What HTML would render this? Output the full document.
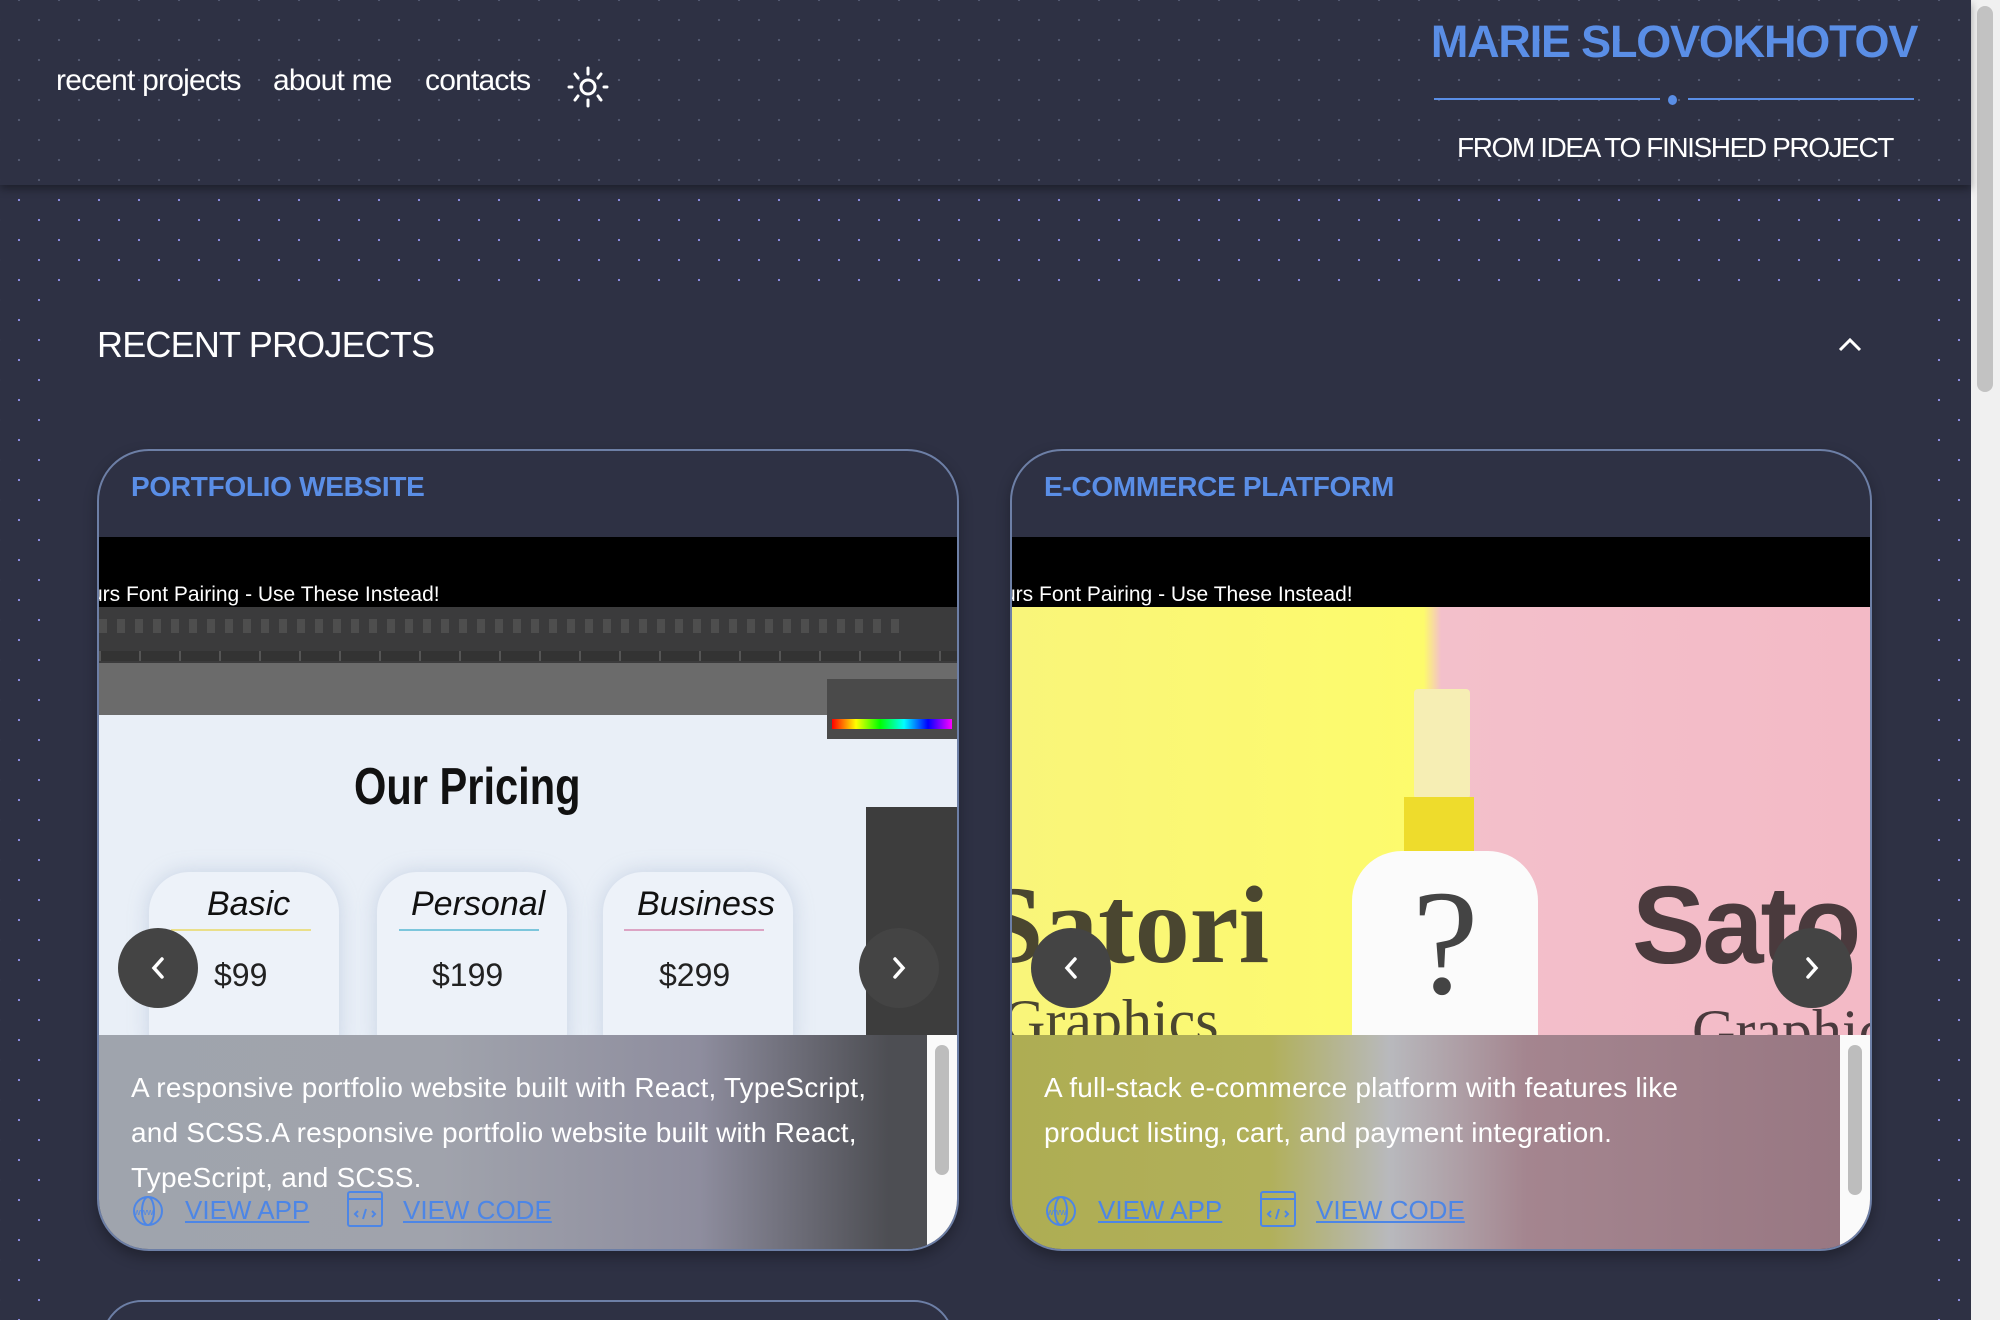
<!DOCTYPE html>
<html><head><meta charset="utf-8">
<style>
*{box-sizing:border-box;margin:0;padding:0}
html,body{width:2000px;height:1320px;overflow:hidden;background:#2e3144;font-family:"Liberation Sans",sans-serif}
.wrap{position:relative;width:2000px;height:1320px;overflow:hidden}
.page{position:absolute;left:0;top:0;width:1971px;height:1320px;background-color:#2e3144;
background-image:radial-gradient(circle,#8e8fe6 1px,transparent 1.3px),radial-gradient(circle,#8e8fe6 1px,transparent 1.3px);
background-size:40px 40px;background-position:19px 0,39px 20px}
.header{position:absolute;left:0;top:0;width:1971px;height:185px;background-color:#2e3144;
background-image:radial-gradient(circle,#545a72 1px,transparent 1.3px),radial-gradient(circle,#545a72 1px,transparent 1.3px);
background-size:40px 40px;background-position:19px 0,39px 20px;box-shadow:0 4px 8px rgba(0,0,0,.35);z-index:2}
.nav{position:absolute;top:64px;font-size:30px;color:#fff;letter-spacing:-.8px}
.name{position:absolute;left:1420px;top:16px;font-size:45px;font-weight:bold;color:#5a8ee6;letter-spacing:-1.2px;white-space:nowrap;width:508px;text-align:center}
.line{position:absolute;top:98px;height:2px;background:#5a8ee6}
.dot{position:absolute;left:1668px;top:95px;width:9px;height:10px;border-radius:50%;background:#5a8ee6}
.tag{position:absolute;left:1457px;top:132px;font-size:28px;color:#fff;letter-spacing:-1.4px;white-space:nowrap}
.scroll{position:absolute;left:1971px;top:0;width:29px;height:1320px;background:#f0f0f0}
.thumb{position:absolute;left:1977px;top:6px;width:16px;height:386px;border-radius:8px;background:#c2c2c2}
.panel{position:absolute;left:46px;top:290px;width:1875px;height:1030px;background:#2e3144}
.sect{position:absolute;left:97px;top:324px;font-size:36px;color:#fff;letter-spacing:-.8px}
.card{position:absolute;top:449px;width:862px;height:802px;border:2px solid #6d7fa6;border-radius:52px;overflow:hidden;background:#2e3144;box-shadow:0 6px 14px rgba(0,0,0,.3)}
.ct{position:absolute;left:32px;top:20px;font-size:28px;font-weight:bold;color:#5a8ee6;letter-spacing:-.3px}
.black{position:absolute;left:0;top:86px;width:100%;height:70px;background:#000}
.bt{position:absolute;left:-8px;top:46px;font-size:21px;color:#fff;white-space:nowrap}
.img{position:absolute;left:0;top:156px;width:100%;height:428px;overflow:hidden}
.ov{position:absolute;left:0;top:584px;width:100%;height:218px}
.desc{position:absolute;left:32px;top:30px;width:830px;font-size:28px;line-height:45px;color:#fff;letter-spacing:.2px;white-space:nowrap}
.links{position:absolute;left:32px;top:156px;height:40px;width:600px}
.lk{position:absolute;top:4px;font-size:26px;color:#4d86e6;text-decoration:underline}
.sb{position:absolute;right:0;top:0;width:30px;height:218px;background:#fafafa}
.sbt{position:absolute;right:8px;top:10px;width:14px;height:130px;border-radius:7px;background:#bdbdbd}
.arr{position:absolute;top:928px;width:80px;height:80px;border-radius:50%;background:#444;z-index:3}
.arr svg{position:absolute;left:25px;top:25px}
</style></head><body><div class="wrap">
<div class="page"></div>
<div class="header">
 <div class="nav" style="left:56px">recent projects</div>
 <div class="nav" style="left:273px">about me</div>
 <div class="nav" style="left:425px">contacts</div>
 <svg style="position:absolute;left:565px;top:64px" width="46" height="46" viewBox="0 0 46 46" fill="none" stroke="#fff" stroke-width="3" stroke-linecap="round">
  <circle cx="23" cy="23" r="7"/><path d="M23 4v6M23 36v6M4 23h3M39 23h3M10 10l3 4M36 10l-3 4M10 36l3-4M36 36l-3-4"/></svg>
 <div class="name">MARIE SLOVOKHOTOV</div>
 <div class="line" style="left:1434px;width:226px"></div>
 <div class="dot"></div>
 <div class="line" style="left:1688px;width:226px"></div>
 <div class="tag">FROM IDEA TO FINISHED PROJECT</div>
</div>
<div class="panel"></div>
<div class="sect">RECENT PROJECTS</div>
<svg style="position:absolute;left:1838px;top:336px" width="24" height="16" viewBox="0 0 24 16" fill="none" stroke="#fff" stroke-width="3"><path d="M2 14L12 4l10 10"/></svg>

<div class="card" style="left:97px">
 <div class="ct">PORTFOLIO WEBSITE</div>
 <div class="black"><div class="bt">urs Font Pairing - Use These Instead!</div></div>
 <div class="img" style="background:#e9eff7">
  <div style="position:absolute;left:0;top:0;width:100%;height:56px;background:#3b3b3c"></div>
  <div style="position:absolute;left:0;top:12px;width:800px;height:14px;background:repeating-linear-gradient(90deg,#5a5a5a 0 8px,#3b3b3c 8px 18px);opacity:.6"></div>
  <div style="position:absolute;left:0;top:44px;width:100%;height:10px;background:repeating-linear-gradient(90deg,#555 0 2px,#333 2px 40px)"></div>
  <div style="position:absolute;left:0;top:56px;width:100%;height:52px;background:#6b6b6b"></div>
  <div style="position:absolute;left:728px;top:72px;width:134px;height:60px;background:#4a4a4a"></div>
  <div style="position:absolute;left:733px;top:112px;width:120px;height:10px;background:linear-gradient(90deg,#f00,#ff0,#0f0,#0ff,#00f,#f0f)"></div>
  <div style="position:absolute;left:767px;top:200px;width:95px;height:230px;background:#3d3d3d"></div>
  <div style="position:absolute;left:255px;top:150px;font-family:'Liberation Sans Narrow','Liberation Sans',sans-serif;font-weight:bold;font-size:52px;color:#111;transform:scaleX(.8);transform-origin:left">Our Pricing</div>
  <div style="position:absolute;left:50px;top:265px;width:190px;height:200px;border-radius:40px;background:#edf2f9;box-shadow:0 0 20px rgba(150,170,200,.4)"></div>
  <div style="position:absolute;left:278px;top:265px;width:190px;height:200px;border-radius:40px;background:#edf2f9;box-shadow:0 0 20px rgba(150,170,200,.4)"></div>
  <div style="position:absolute;left:504px;top:265px;width:190px;height:200px;border-radius:40px;background:#edf2f9;box-shadow:0 0 20px rgba(150,170,200,.4)"></div>
  <div style="position:absolute;left:108px;top:278px;font-size:34px;font-style:italic;color:#111">Basic</div>
  <div style="position:absolute;left:312px;top:278px;font-size:34px;font-style:italic;color:#111">Personal</div>
  <div style="position:absolute;left:538px;top:278px;font-size:34px;font-style:italic;color:#111">Business</div>
  <div style="position:absolute;left:72px;top:322px;width:140px;height:2px;background:#eadf8a"></div>
  <div style="position:absolute;left:300px;top:322px;width:140px;height:2px;background:#7cc6dc"></div>
  <div style="position:absolute;left:525px;top:322px;width:140px;height:2px;background:#dca4c4"></div>
  <div style="position:absolute;left:115px;top:350px;font-size:32px;color:#222">$99</div>
  <div style="position:absolute;left:333px;top:350px;font-size:32px;color:#222">$199</div>
  <div style="position:absolute;left:560px;top:350px;font-size:32px;color:#222">$299</div>
 </div>
 <div class="ov" style="background:linear-gradient(90deg,#9fa4ad 0%,#a0a3ac 40%,#8e8d9e 70%,#4d4e53 92%)">
  <div class="desc">A responsive portfolio website built with React, TypeScript,<br>and SCSS.A responsive portfolio website built with React,<br>TypeScript, and SCSS.</div>
  <div class="links">
   <svg style="position:absolute;left:0;top:4px" width="34" height="32" viewBox="0 0 34 32" fill="none" stroke="#4d86e6" stroke-width="2"><circle cx="17" cy="16" r="14"/><ellipse cx="17" cy="16" rx="6" ry="14"/><text x="3" y="20" font-size="9" fill="#4d86e6" stroke="none" font-family="Liberation Sans">www</text></svg>
   <div class="lk" style="left:54px">VIEW APP</div>
   <svg style="position:absolute;left:216px;top:0" width="36" height="36" viewBox="0 0 36 36" fill="none" stroke="#4d86e6" stroke-width="2"><rect x="1" y="1" width="34" height="34" rx="2"/><path d="M1 8h34M11 20l-3 3 3 3M25 20l3 3-3 3M19 18l-3 10"/></svg>
   <div class="lk" style="left:272px">VIEW CODE</div>
  </div>
  <div class="sb"><div class="sbt"></div></div>
 </div>
</div>

<div class="card" style="left:1010px">
 <div class="ct">E-COMMERCE PLATFORM</div>
 <div class="black"><div class="bt">urs Font Pairing - Use These Instead!</div></div>
 <div class="img" style="background:linear-gradient(90deg,#f9f57a 0%,#fdfb6c 48%,#f3c0cb 50%,#f3bac6 100%)">
  <div style="position:absolute;left:402px;top:82px;width:56px;height:110px;background:#f6eeb4;border-radius:4px"></div>
  <div style="position:absolute;left:392px;top:190px;width:70px;height:60px;background:#eedc2c"></div>
  <div style="position:absolute;left:340px;top:244px;width:186px;height:200px;background:#fbfbfb;border-radius:50px 50px 0 0"></div>
  <div style="position:absolute;left:400px;top:250px;font-family:'Liberation Serif',serif;font-size:150px;color:#444">?</div>
  <div style="position:absolute;left:-30px;top:255px;font-family:'Liberation Serif',serif;font-weight:bold;font-size:110px;color:#4a4630">Satori</div>
  <div style="position:absolute;left:-10px;top:380px;font-family:'Liberation Serif',serif;font-size:60px;color:#4a4630">Graphics</div>
  <div style="position:absolute;left:620px;top:255px;font-family:'Liberation Sans',sans-serif;font-weight:bold;font-size:110px;color:#4a3a3d;letter-spacing:-3px">Sato</div>
  <div style="position:absolute;left:680px;top:390px;font-family:'Liberation Serif',serif;font-size:60px;color:#4a3a3d">Graphics</div>
 </div>
 <div class="ov" style="background:linear-gradient(90deg,#aead53 0%,#b1b05a 30%,#b8b9bd 44%,#a4858f 60%,#977681 100%)">
  <div class="desc">A full-stack e-commerce platform with features like<br>product listing, cart, and payment integration.</div>
  <div class="links">
   <svg style="position:absolute;left:0;top:4px" width="34" height="32" viewBox="0 0 34 32" fill="none" stroke="#4d86e6" stroke-width="2"><circle cx="17" cy="16" r="14"/><ellipse cx="17" cy="16" rx="6" ry="14"/><text x="3" y="20" font-size="9" fill="#4d86e6" stroke="none" font-family="Liberation Sans">www</text></svg>
   <div class="lk" style="left:54px">VIEW APP</div>
   <svg style="position:absolute;left:216px;top:0" width="36" height="36" viewBox="0 0 36 36" fill="none" stroke="#4d86e6" stroke-width="2"><rect x="1" y="1" width="34" height="34" rx="2"/><path d="M1 8h34M11 20l-3 3 3 3M25 20l3 3-3 3M19 18l-3 10"/></svg>
   <div class="lk" style="left:272px">VIEW CODE</div>
  </div>
  <div class="sb"><div class="sbt" style="height:150px"></div></div>
 </div>
</div>

<div class="arr" style="left:118px"><svg width="30" height="30" viewBox="0 0 30 30" fill="none" stroke="#fff" stroke-width="3.5" stroke-linecap="round"><path d="M19 6l-8 9 8 9"/></svg></div>
<div class="arr" style="left:859px"><svg width="30" height="30" viewBox="0 0 30 30" fill="none" stroke="#fff" stroke-width="3.5" stroke-linecap="round"><path d="M11 6l8 9-8 9"/></svg></div>
<div class="arr" style="left:1031px"><svg width="30" height="30" viewBox="0 0 30 30" fill="none" stroke="#fff" stroke-width="3.5" stroke-linecap="round"><path d="M19 6l-8 9 8 9"/></svg></div>
<div class="arr" style="left:1772px"><svg width="30" height="30" viewBox="0 0 30 30" fill="none" stroke="#fff" stroke-width="3.5" stroke-linecap="round"><path d="M11 6l8 9-8 9"/></svg></div>

<div style="position:absolute;left:102px;top:1300px;width:852px;height:20px;overflow:hidden"><div style="width:852px;height:80px;border:2px solid #6d7fa6;border-radius:50px"></div></div>
<div class="scroll"></div><div class="thumb"></div>
</div></body></html>
